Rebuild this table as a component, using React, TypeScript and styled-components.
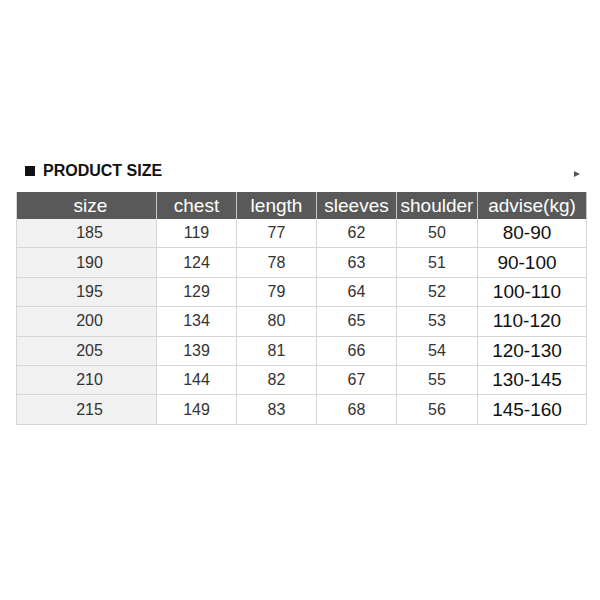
import styled, { createGlobalStyle } from "styled-components";

const GlobalStyle = createGlobalStyle`
    html, body {
        margin: 0;
        padding: 0;
        background: #ffffff;
    }
    body {
        font-family: "Liberation Sans", Arial, sans-serif;
    }
`;

const headers = ["size", "chest", "length", "sleeves", "shoulder", "advise(kg)"];

const rows = [
    ["185", "119", "77", "62", "50", "80-90"],
    ["190", "124", "78", "63", "51", "90-100"],
    ["195", "129", "79", "64", "52", "100-110"],
    ["200", "134", "80", "65", "53", "110-120"],
    ["205", "139", "81", "66", "54", "120-130"],
    ["210", "144", "82", "67", "55", "130-145"],
    ["215", "149", "83", "68", "56", "145-160"],
];

export default function App() {
    return (
        <Page>
            <GlobalStyle />
            <TitleBar>
                <Title>
                    <Square />
                    PRODUCT SIZE
                </Title>
                <Arrow />
            </TitleBar>
            <Table>
                {headers.map((h, i) => (
                    <HeadCell key={h} $first={i === 0}>{h}</HeadCell>
                ))}
                {rows.map((row) =>
                    row.map((value, i) => (
                        <Cell key={row[0] + i} $first={i === 0} $advise={i === 5}>
                            {value}
                        </Cell>
                    ))
                )}
            </Table>
        </Page>
    );
}

const Page = styled.div`
    width: 600px;
    height: 600px;
    box-sizing: border-box;
    padding: 161px 14px 0 16px;
    display: flex;
    flex-direction: column;
`;

const TitleBar = styled.div`
    display: flex;
    align-items: center;
    justify-content: space-between;
    height: 20px;
    margin-bottom: 11px;
    padding: 0 6px 0 9px;
`;

const Title = styled.div`
    display: flex;
    align-items: center;
    gap: 8px;
    font-size: 16px;
    font-weight: 700;
    color: #111;
`;

const Square = styled.span`
    width: 10px;
    height: 10px;
    background: #111;
`;

const Arrow = styled.span`
    width: 0;
    height: 0;
    margin-top: 5px;
    border-top: 3.5px solid transparent;
    border-bottom: 3.5px solid transparent;
    border-left: 6px solid #555;
`;

const Table = styled.div`
    display: grid;
    grid-template-columns: 140px 80px 80px 80px 81px 109px;
    grid-auto-rows: 29.4px;
    grid-template-rows: 27px;
    width: 570px;
    border-left: 1px solid #d6d6d6;
    box-sizing: border-box;
`;

const HeadCell = styled.div<{ $first?: boolean }>`
    display: flex;
    align-items: center;
    justify-content: center;
    background: #595959;
    color: #ffffff;
    font-size: 19px;
    padding-left: ${(p) => (p.$first ? "8px" : "0")};
    border-right: 1px solid #c8c8c8;
    white-space: nowrap;
    &:last-of-type {
        border-right-color: #d6d6d6;
    }
`;

const Cell = styled.div<{ $first?: boolean; $advise?: boolean }>`
    display: flex;
    align-items: center;
    justify-content: center;
    background: ${(p) => (p.$first ? "#f1f1f1" : "#ffffff")};
    color: ${(p) => (p.$advise ? "#111" : "#333")};
    font-size: ${(p) => (p.$advise ? "19px" : "16px")};
    padding-left: ${(p) => (p.$first ? "6px" : "0")};
    padding-right: ${(p) => (p.$advise ? "10px" : "0")};
    border-right: 1px solid #d6d6d6;
    border-bottom: 1px solid #d6d6d6;
`;
